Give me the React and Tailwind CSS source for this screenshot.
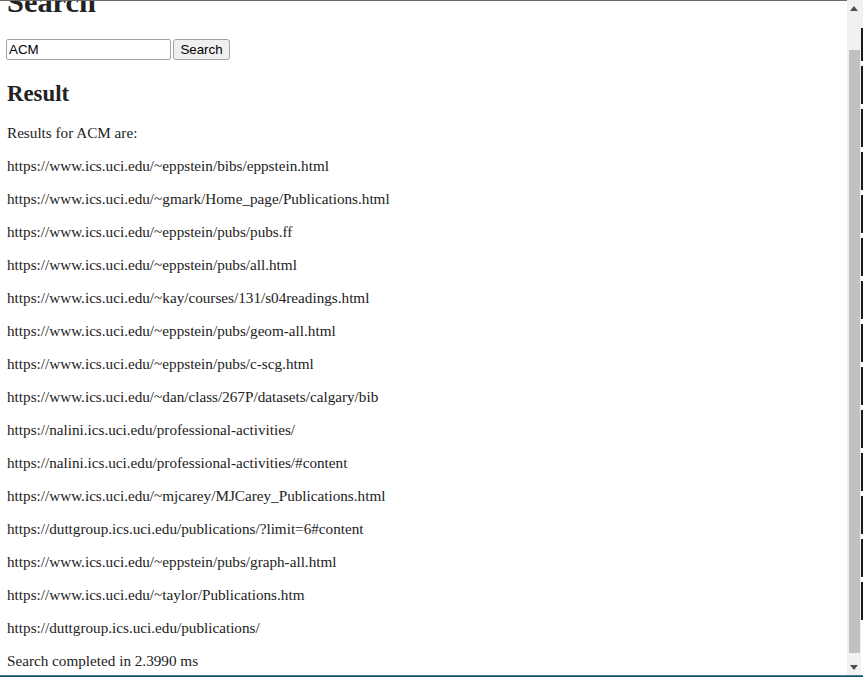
import React, { useState } from "react";

const results = [
  "https://www.ics.uci.edu/~eppstein/bibs/eppstein.html",
  "https://www.ics.uci.edu/~gmark/Home_page/Publications.html",
  "https://www.ics.uci.edu/~eppstein/pubs/pubs.ff",
  "https://www.ics.uci.edu/~eppstein/pubs/all.html",
  "https://www.ics.uci.edu/~kay/courses/131/s04readings.html",
  "https://www.ics.uci.edu/~eppstein/pubs/geom-all.html",
  "https://www.ics.uci.edu/~eppstein/pubs/c-scg.html",
  "https://www.ics.uci.edu/~dan/class/267P/datasets/calgary/bib",
  "https://nalini.ics.uci.edu/professional-activities/",
  "https://nalini.ics.uci.edu/professional-activities/#content",
  "https://www.ics.uci.edu/~mjcarey/MJCarey_Publications.html",
  "https://duttgroup.ics.uci.edu/publications/?limit=6#content",
  "https://www.ics.uci.edu/~eppstein/pubs/graph-all.html",
  "https://www.ics.uci.edu/~taylor/Publications.htm",
  "https://duttgroup.ics.uci.edu/publications/",
];

function Scrollbar() {
  return (
    <div className="w-[14px] bg-[#f1f1f1] flex flex-col">
      <div className="h-[17px] flex items-center justify-center">
        <svg width="8" height="5" viewBox="0 0 8 5">
          <polygon points="0,5 4,0 8,5" fill="#505050" />
        </svg>
      </div>
      <div className="h-[33px]" />
      <div className="h-[603px] ml-[2px] w-[11px] bg-[#c1c1c1]" />
      <div className="flex-1 flex items-end justify-center pb-[5px]">
        <svg width="8" height="5" viewBox="0 0 8 5">
          <polygon points="0,0 8,0 4,5" fill="#505050" />
        </svg>
      </div>
    </div>
  );
}

function Edge() {
  const segs = Array.from({ length: 13 });
  return (
    <div className="w-[2px] bg-white flex flex-col gap-[5px]">
      <div className="h-[28px] -mb-[5px] bg-[#f1f1f1]" />
      <div className="h-[33px] bg-[#1a1a1a]" />
      {segs.map((_, i) => (
        <div key={i} className="h-[38px] bg-[#1a1a1a]" />
      ))}
    </div>
  );
}

export default function App() {
  const [query, setQuery] = useState("ACM");

  return (
    <div className="w-[863px] h-[677px] overflow-hidden bg-white flex flex-col">
      <div className="flex h-[675px]">
        <main className="flex-1 border-t border-[#6a6a6a] overflow-hidden font-['Liberation_Serif',serif] text-[#222]">
          <div className="mt-[-16px] pl-[7px]">
            <h1 className="text-[30.4px] leading-[35px] font-bold">Search</h1>

            <div className="mt-[19px] flex items-center -ml-[1px]">
              <input
                type="text"
                value={query}
                onChange={(e) => setQuery(e.target.value)}
                className="w-[165px] h-[21px] px-[2px] border border-[#a3a3a3] rounded-[2px] text-[13.33px] font-['Liberation_Sans',Arial,sans-serif] text-black outline-none"
              />
              <button className="ml-[2px] w-[57px] h-[21px] bg-[#efefef] border border-[#a3a3a3] rounded-[3px] text-[13.33px] font-['Liberation_Sans',Arial,sans-serif] text-black">
                Search
              </button>
            </div>

            <h2 className="mt-[20px] text-[22.8px] leading-[27px] font-bold">Result</h2>

            <div className="mt-[17px] text-[15.2px] leading-[17px] flex flex-col gap-[16px]">
              <p>Results for {query} are:</p>
              {results.map((url) => (
                <p key={url}>{url}</p>
              ))}
              <p>Search completed in 2.3990 ms</p>
            </div>
          </div>
        </main>
        <Scrollbar />
        <Edge />
      </div>
      <div className="h-[1px] bg-[#3b86a8]" />
      <div className="h-[1px] bg-[#24485a]" />
    </div>
  );
}
